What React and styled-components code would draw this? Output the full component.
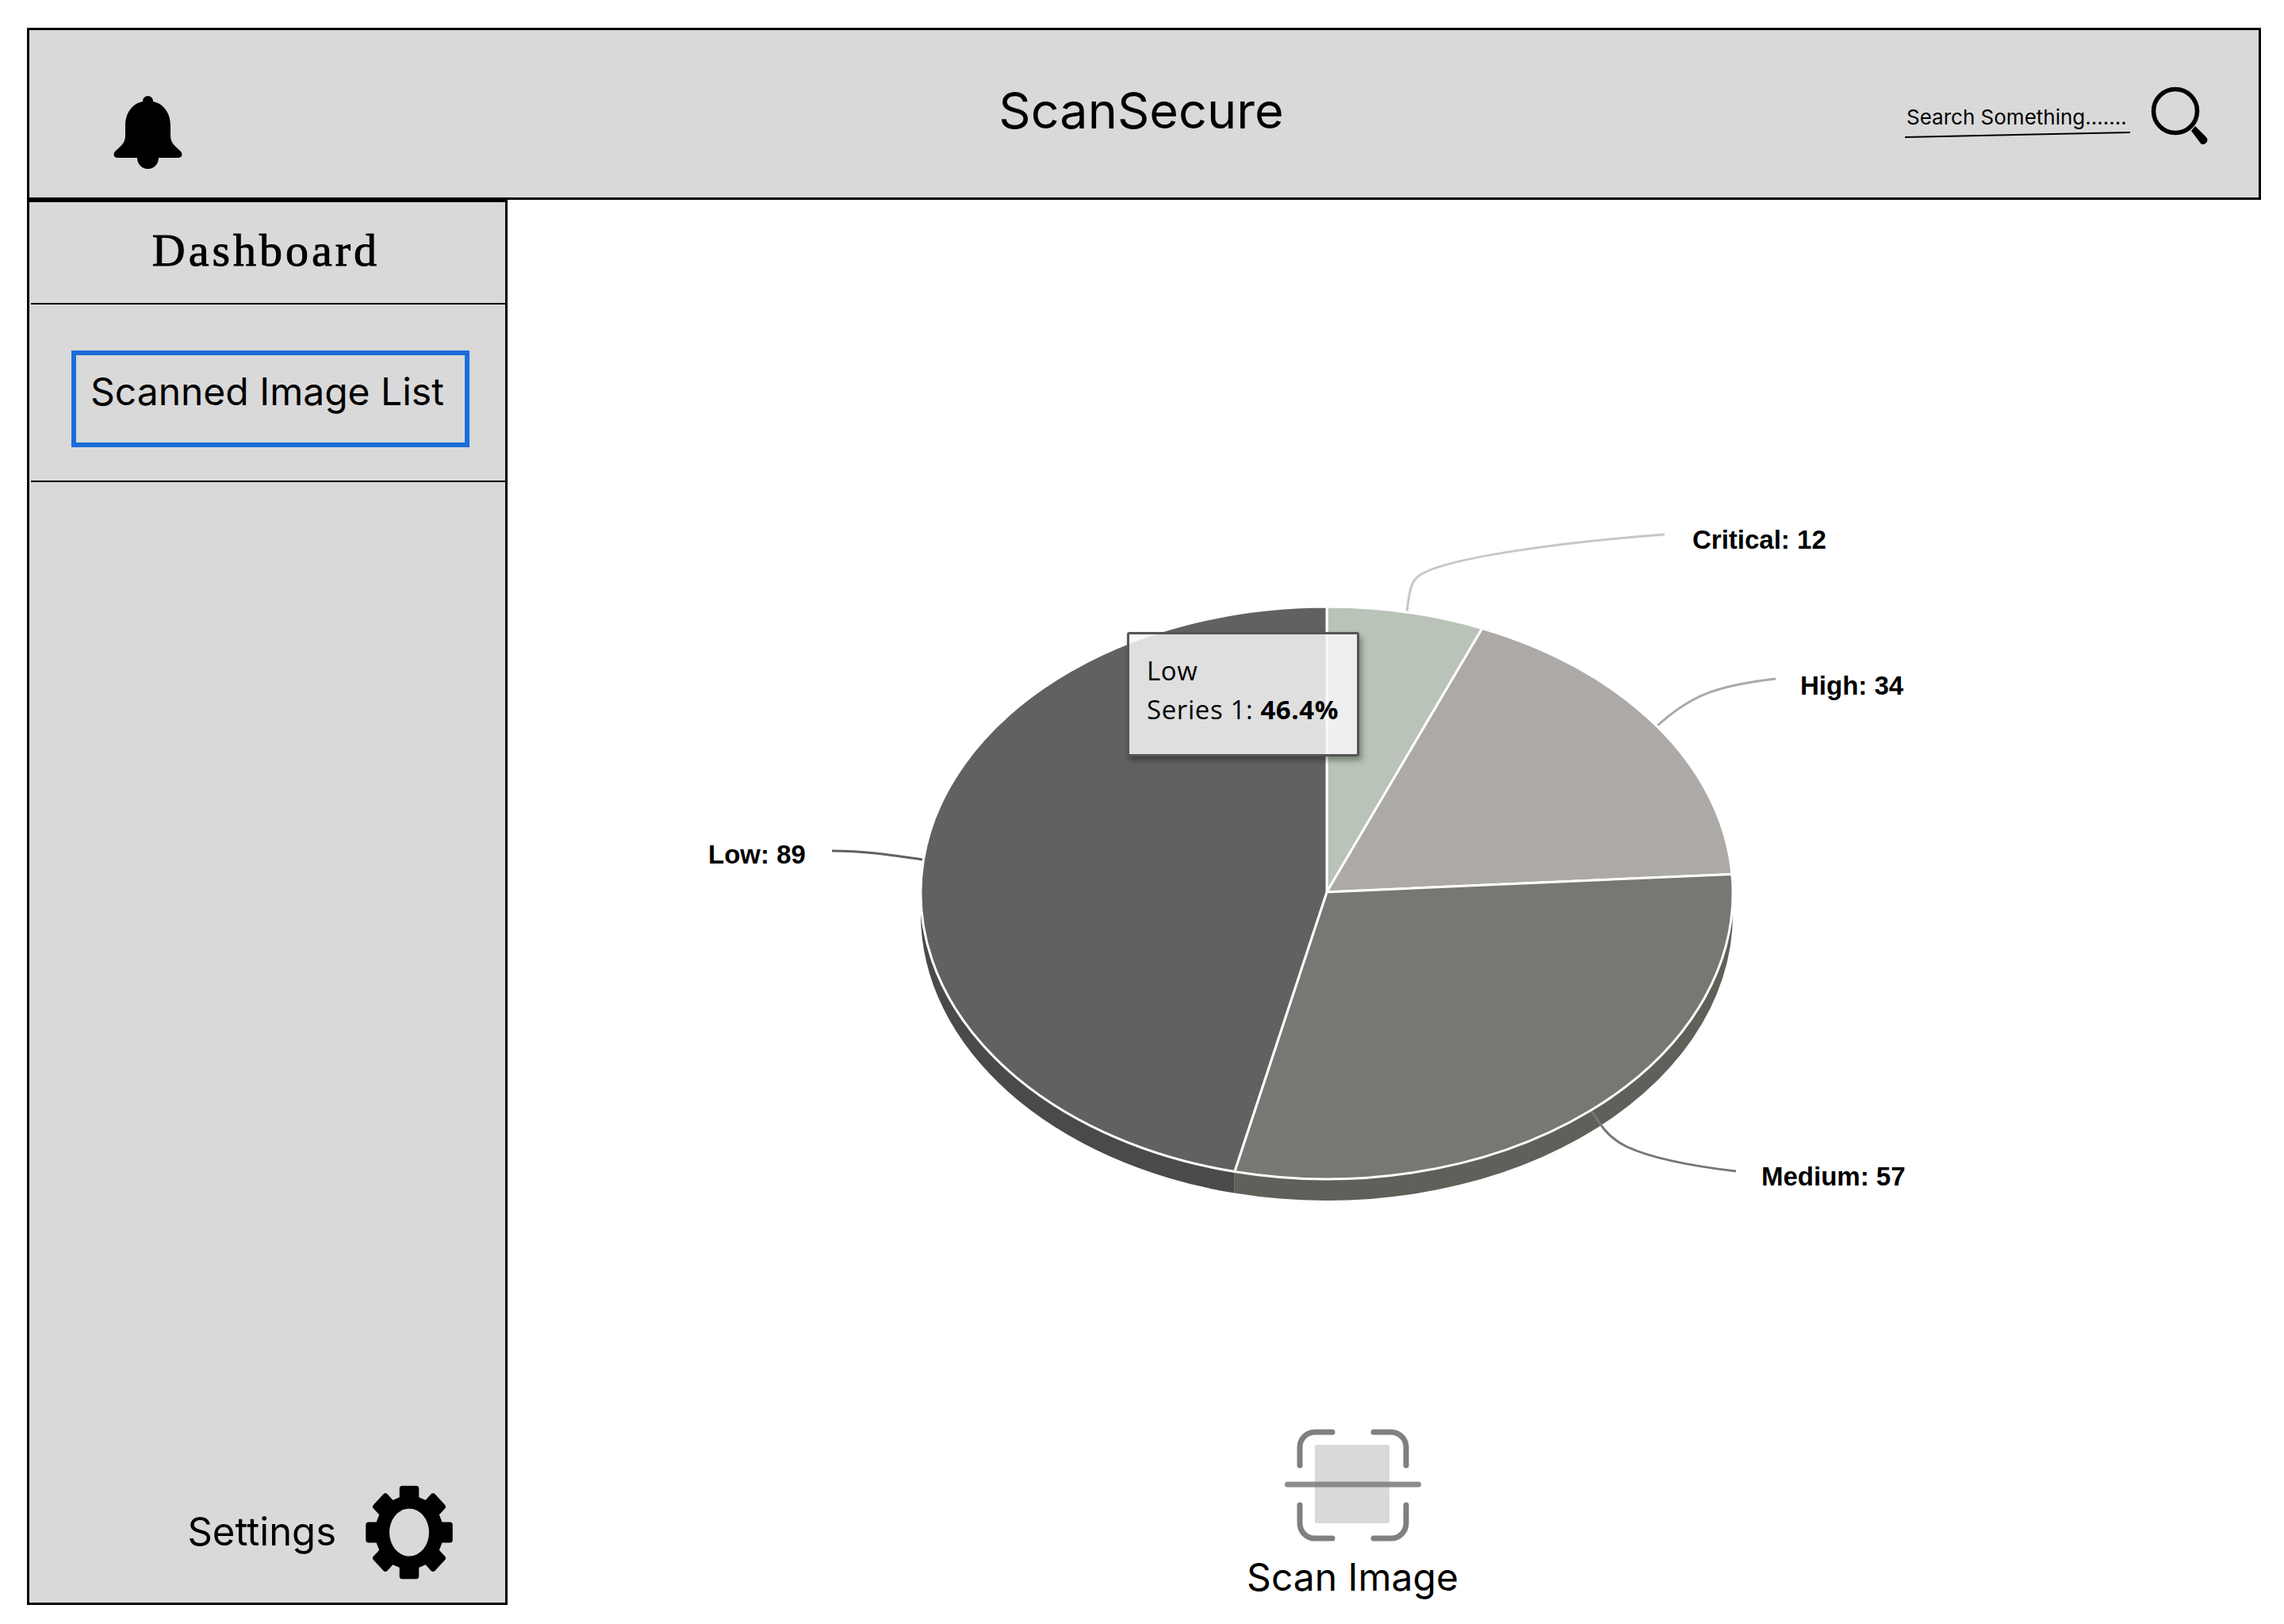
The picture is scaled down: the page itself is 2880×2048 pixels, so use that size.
import React from 'react';
import styled, { createGlobalStyle } from 'styled-components';

const GlobalStyle = createGlobalStyle`
	html, body {
		margin: 0;
		background: #fff;
		font-family: Inter, "Liberation Sans", sans-serif;
		color: #000;
	}
	* {
		box-sizing: border-box;
	}
`;

const Page = styled.div`
	width: 2880px;
	height: 2048px;
	padding: 35px 29px 24px 34px;
	display: flex;
	flex-direction: column;
	overflow: hidden;
`;

const Header = styled.header`
	height: 217px;
	flex: none;
	display: grid;
	grid-template-columns: 1fr auto 1fr;
	align-items: center;
	background: #d9d9d9;
	border: 3px solid #000;
	padding: 0 64px;
`;

const BellWrap = styled.div`
	display: flex;
	margin: 46px 0 0 42px;
`;

const Title = styled.h1`
	margin: 0 7px 8px 0;
	font-size: 63px;
	font-weight: 400;
	line-height: 1;
`;

const Search = styled.div`
	display: flex;
	justify-content: flex-end;
	align-items: center;
	gap: 26px;
	margin-top: 4px;
`;

const SearchField = styled.div`
	width: 284px;
	margin-top: 12px;
	padding-left: 0;
	font-size: 26px;
	line-height: 36px;
	white-space: nowrap;
	text-indent: 2px;
`;

const SearchLine = styled.svg`
	display: block;
	width: 284px;
	height: 8px;
`;

const Body = styled.div`
	flex: 1;
	display: flex;
	min-height: 0;
`;

const Sidebar = styled.aside`
	width: 606px;
	flex: none;
	display: flex;
	flex-direction: column;
	background: #d9d9d9;
	border: 3px solid #000;
`;

const SideHeading = styled.div`
	height: 129px;
	margin-left: 2px;
	display: flex;
	align-items: center;
	justify-content: center;
	padding: 0 5px 7px 0;
	border-bottom: 2px solid #000;
	font-family: "Liberation Serif", serif;
	font-size: 58px;
	letter-spacing: 4px;
	-webkit-text-stroke: 1px #000;
`;

const SideList = styled.div`
	height: 224px;
	margin-left: 2px;
	padding: 58px 0 0 51px;
	border-bottom: 2px solid #000;
`;

const ListButton = styled.div`
	width: 502px;
	height: 122px;
	padding: 16px 0 0 18px;
	border: 6px solid #1a6ddb;
	font-size: 48px;
	line-height: 60px;
	white-space: nowrap;
`;

const SettingsRow = styled.div`
	margin-top: auto;
	display: flex;
	align-items: center;
	justify-content: flex-end;
	gap: 36px;
	padding: 0 65px 28px 0;
	font-size: 49px;
`;

const SettingsLabel = styled.span`
	margin-bottom: 3px;
`;

const Main = styled.main`
	flex: 1;
	display: flex;
	flex-direction: column;
	min-width: 0;
`;

const ChartArea = styled.div`
	position: relative;
	height: 1550px;
	flex: none;
`;

const ChartSvg = styled.svg`
	display: block;
	width: 100%;
	height: 100%;
`;

const ChartLabel = styled.text`
	font-family: "Liberation Sans", Arial, sans-serif;
	font-size: 33px;
	font-weight: 700;
	fill: #000;
`;

const Tooltip = styled.div`
	position: absolute;
	left: 781px;
	top: 545px;
	width: 293px;
	height: 157px;
	padding: 21px 0 0 22px;
	background: rgba(248, 248, 248, 0.84);
	border: 3px solid #555;
	border-radius: 3px;
	box-shadow: 3px 5px 7px rgba(0, 0, 0, 0.35);
	font-family: "Open Sans", "DejaVu Sans", sans-serif;
	font-size: 33px;
	line-height: 49px;
	white-space: nowrap;
	letter-spacing: 0.6px;

	b {
		font-weight: 700;
	}
`;

const ScanButton = styled.div`
	align-self: center;
	margin-right: 80px;
	display: flex;
	flex-direction: column;
	align-items: center;
	gap: 15px;
	font-size: 48px;
	line-height: 60px;
`;

const BellIcon = () => (
	<svg width="87" height="92" viewBox="0 0 87 92">
		<path d="M43.5 0a6.5 6.5 0 0 1 6.5 7C64 10 72 22 72 38v12c0 8 4 12 12 19 4 4 3 9-2 9H57c0 8-6 14-13.500 14S30 86 30 78H5c-5 0-6-5-2-9 8-7 12-11 12-19V38c0-16 8-28 22-31a6.5 6.5 0 0 1 6.5-7z" />
	</svg>
);

const SearchIcon = () => (
	<svg width="72" height="74" viewBox="0 0 72 74">
		<circle cx="31" cy="31" r="27.5" fill="none" stroke="#000" strokeWidth="5.5" />
		<path d="M51 56l5-6 14 14c2 2 2 5 0 7s-5 3-7 1z" />
	</svg>
);

// teeth are flat-topped wedges, the whole gear is slightly taller than wide
const gearPoints = () => {
	const pts = [];
	for (let i = 0; i < 8; i++) {
		const a = (i * Math.PI) / 4;
		[[-0.22, 40], [-0.17, 52], [0.17, 52], [0.22, 40]].forEach(([da, r]) => {
			pts.push(`${56 + r * Math.sin(a + da)},${60.5 - r * 1.08 * Math.cos(a + da)}`);
		});
	}
	return pts.join(' ');
};

const GearIcon = () => (
	<svg width="112" height="121" viewBox="0 0 112 121">
		<polygon points={gearPoints()} stroke="#000" strokeWidth="7" strokeLinejoin="round" />
		<ellipse cx="56" cy="60.5" rx="25" ry="30" fill="#d9d9d9" />
	</svg>
);

const ScanIcon = () => (
	<svg width="172" height="142" viewBox="0 0 172 142">
		<rect x="38" y="20" width="94" height="99" rx="2" fill="#d9d9d9" />
		<g fill="none" stroke="#808080" strokeWidth="7" strokeLinecap="round">
			<path d="M19 46V23a19 19 0 0 1 19-19h22" />
			<path d="M112 4h22a19 19 0 0 1 19 19v23" />
			<path d="M19 96v23a19 19 0 0 0 19 19h22" />
			<path d="M112 138h22a19 19 0 0 0 19-19V96" />
			<path d="M3.500 70h165" opacity="0.9" />
		</g>
	</svg>
);

// pie geometry, in page coordinates (the svg viewBox starts at the main area's corner)
const CX = 1673;
const CY = 1126;
const RX = 512;
const RY = 361;
const DEPTH = 27;
const HUB = `${CX},1125`;

const slices = [
	{ name: 'Critical', value: 12, color: '#b9c3b8' },
	{ name: 'High', value: 34, color: '#aca9a7' },
	{ name: 'Medium', value: 57, color: '#777873' },
	{ name: 'Low', value: 89, color: '#616161' },
];

const total = slices.reduce((sum, s) => sum + s.value, 0);

const pointAt = fraction => {
	const a = fraction * 2 * Math.PI;
	return [CX + RX * Math.sin(a), CY - RY * Math.cos(a)];
};

const slicePath = (from, to) => {
	const [x1, y1] = pointAt(from);
	const [x2, y2] = pointAt(to);
	const large = to - from > 0.5 ? 1 : 0;
	return `M${HUB} L${x1},${y1} A${RX} ${RY} 0 ${large} 1 ${x2},${y2} Z`;
};

const wallPath = (from, to) => {
	const [x1, y1] = pointAt(from);
	const [x2, y2] = pointAt(to);
	return `M${x1},${y1} A${RX} ${RY} 0 0 1 ${x2},${y2} L${x2},${y2 + DEPTH} A${RX} ${RY} 0 0 0 ${x1},${y1 + DEPTH} Z`;
};

const PieChart = () => {
	let acc = 0;
	const arcs = slices.map(s => {
		const from = acc / total;
		acc += s.value;
		return { ...s, from, to: acc / total };
	});
	const boundary = arcs[2].to;
	return (
		<ChartSvg viewBox="640 252 2211 1550">
			<path d={wallPath(0.25, boundary)} fill="#5f605a" />
			<path d={wallPath(boundary, 0.75)} fill="#4a4a49" />

			<g fill="none" strokeWidth="3">
				<path d="M1774 771c3-22 4-36 14-44 30-24 190-44 311-53" stroke="#c4c9c3" />
				<path d="M2090 915c40-36 70-50 149-59" stroke="#aca9a7" />
				<path d="M2007 1401c12 20 22 34 44 45 28 13 78 24 138 31" stroke="#777873" />
				<path d="M1049 1073c45 0 80 6 115 11" stroke="#616161" />
			</g>

			{arcs.map(s => (
				<path key={s.name} d={slicePath(s.from, s.to)} fill={s.color} stroke="#fff" strokeWidth="3" strokeLinejoin="round" />
			))}

			<ChartLabel x="2134" y="692">Critical: 12</ChartLabel>
			<ChartLabel x="2270" y="876">High: 34</ChartLabel>
			<ChartLabel x="2221" y="1495">Medium: 57</ChartLabel>
			<ChartLabel x="893" y="1089">Low: 89</ChartLabel>
		</ChartSvg>
	);
};

const App = () => (
	<Page>
		<GlobalStyle />
		<Header>
			<BellWrap><BellIcon /></BellWrap>
			<Title>ScanSecure</Title>
			<Search>
				<SearchField>
					Search Something.......
					<SearchLine viewBox="0 0 284 8">
						<line x1="0" y1="7" x2="284" y2="1" stroke="#000" strokeWidth="2" />
					</SearchLine>
				</SearchField>
				<SearchIcon />
			</Search>
		</Header>
		<Body>
			<Sidebar>
				<SideHeading>Dashboard</SideHeading>
				<SideList>
					<ListButton>Scanned Image List</ListButton>
				</SideList>
				<SettingsRow>
					<SettingsLabel>Settings</SettingsLabel>
					<GearIcon />
				</SettingsRow>
			</Sidebar>
			<Main>
				<ChartArea>
					<PieChart />
					<Tooltip>
						Low<br />
						Series 1: <b>46.4%</b>
					</Tooltip>
				</ChartArea>
				<ScanButton>
					<ScanIcon />
					Scan Image
				</ScanButton>
			</Main>
		</Body>
	</Page>
);

export default App;
